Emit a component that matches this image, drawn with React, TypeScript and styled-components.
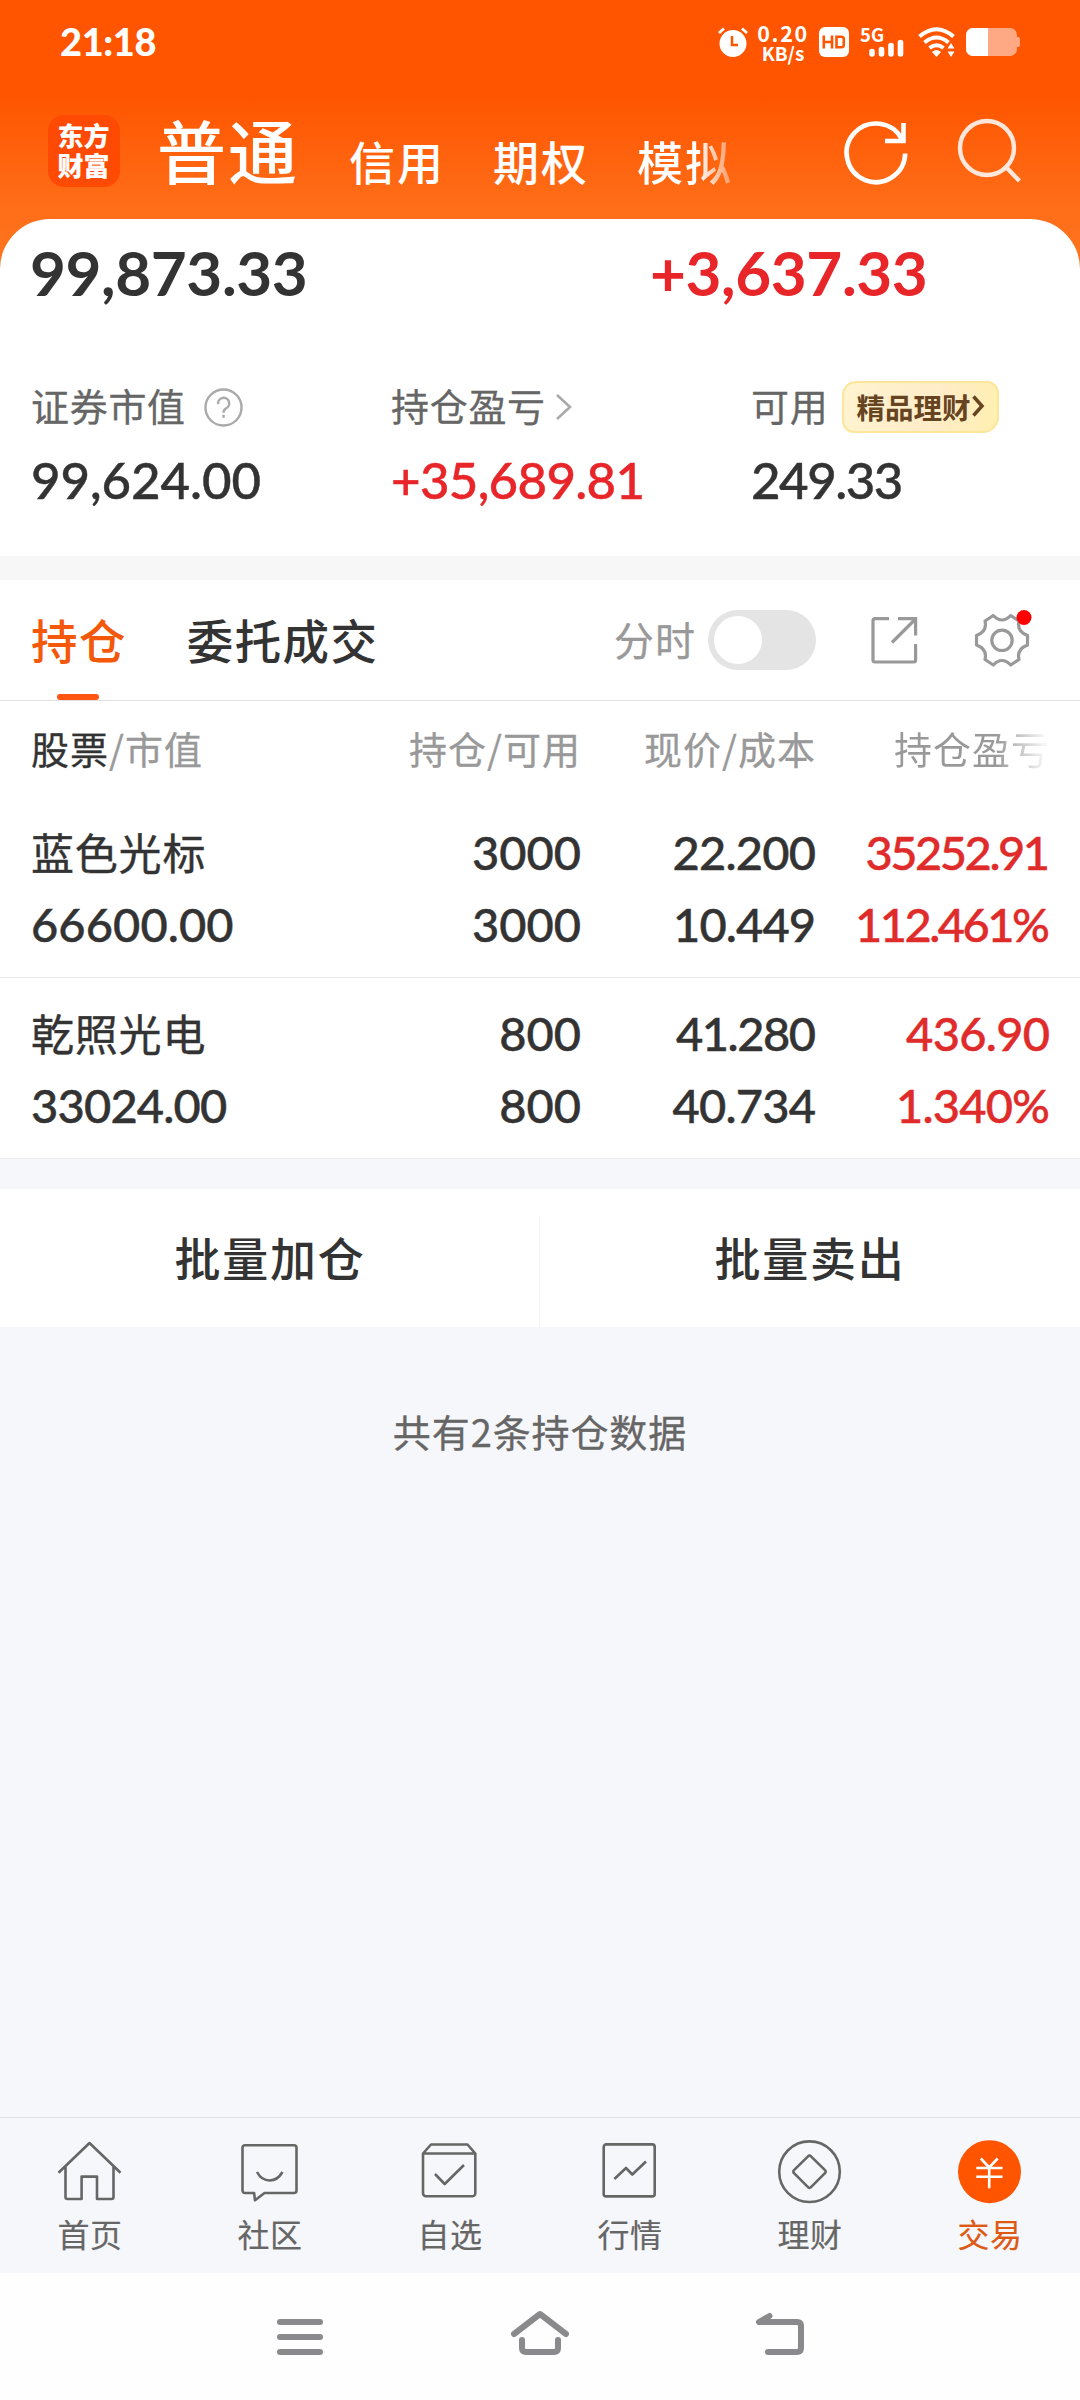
import React from "react";
import styled, { createGlobalStyle } from "styled-components";

const CJK = `"Noto Sans CJK SC", sans-serif`;
const NUM = `Lato, "Noto Sans CJK SC", sans-serif`;

const Global = createGlobalStyle`
  * { box-sizing: border-box; }
  body { margin: 0; background: #f6f7fa; font-family: ${CJK}; }
`;

const Screen = styled.div`
  width: 1080px;
  height: 2400px;
  display: flex;
  flex-direction: column;
  background: #f6f7fa;
  color: #333;
  overflow: hidden;
`;

const Hero = styled.header`
  height: 280px;
  margin-bottom: -61px;
  flex: none;
  background: linear-gradient(#ff5500 0, #ff5500 95px, #ff6e19 210px, #ff761f 280px);
  color: #fff;
`;

const StatusBar = styled.div`
  height: 84px;
  padding: 0 60px;
  display: flex;
  align-items: center;
`;

const Clock = styled.div`
  flex: 1;
  padding-bottom: 2px;
  font: 900 38px/48px ${NUM};
  letter-spacing: -0.4px;
`;

const StatusIcons = styled.div`
  display: flex;
  align-items: center;
`;

const Speed = styled.div`
  width: 52px;
  margin: 0 10px 0 9px;
  display: flex;
  flex-direction: column;
  align-items: center;
`;

const SpeedLine = styled.span<{ $wide?: boolean }>`
  font: 700 ${(p) => (p.$wide ? 21.5 : 19)}px/${(p) => (p.$wide ? 21 : 19)}px ${CJK};
  letter-spacing: ${(p) => (p.$wide ? 1.6 : 0)}px;
`;

const NavBar = styled.div`
  height: 135px;
  padding-left: 48px;
  display: flex;
`;

const Logo = styled.div`
  width: 72px;
  height: 72px;
  margin-top: 31px;
  padding: 5px 1px 0 0;
  border-radius: 16px;
  background: #ff4a04;
  text-align: center;
  font: 900 26px/30px ${CJK};
`;

const Account = styled.div<{ $w: number; $big?: boolean; $fade?: boolean }>`
  width: ${(p) => p.$w}px;
  height: 120px;
  white-space: nowrap;
  font-weight: 500;
  font-size: ${(p) => (p.$big ? 69 : 46)}px;
  line-height: ${(p) => (p.$big ? 130 : 153)}px;
  letter-spacing: 2px;
  ${(p) => p.$fade && `
    color: transparent;
    background: linear-gradient(90deg, #fff 60px, rgba(255,255,255,.35) 94px);
    -webkit-background-clip: text;
    background-clip: text;
  `}
`;

const AccountList = styled.div`
  width: 790px;
  padding-left: 37px;
  display: flex;
`;

const NavIcons = styled.div`
  display: flex;
  padding-top: 33px;
  gap: 48px;
  margin-left: -67px;
`;

const Card = styled.section`
  height: 337px;
  flex: none;
  position: relative;
  border-radius: 50px 50px 0 0;
  background: #fff;
`;

const Totals = styled.div`
  display: grid;
  grid-template-columns: 620px 1fr;
  padding: 16px 0 0 30px;
  font: 700 62px/74px ${NUM};
`;

const Total = styled.div<{ $up?: boolean }>`
  color: ${(p) => (p.$up ? "#e8262a" : "#333")};
  letter-spacing: -0.4px;
`;

const Stats = styled.div`
  display: grid;
  grid-template-columns: 360px 360px 1fr;
  padding: 67px 0 0 31px;
`;

const StatLabel = styled.div`
  height: 62px;
  display: flex;
  align-items: center;
  font-size: 38px;
  letter-spacing: 0.7px;
  color: #666;
  white-space: nowrap;
`;

const LabelText = styled.span`
  padding-bottom: 6px;
  -webkit-text-stroke: 0.3px;
`;

const StatValue = styled.div<{ $up?: boolean; $ls?: number }>`
  padding-top: 6px;
  font: 500 51px/72px ${NUM};
  letter-spacing: ${(p) => p.$ls ?? 0}px;
  -webkit-text-stroke: 0.45px;
  color: ${(p) => (p.$up ? "#e8262a" : "#333")};
`;

const Promo = styled.div`
  width: 157px;
  height: 52px;
  margin-left: 14px;
  padding: 0 0 2px 12px;
  display: flex;
  align-items: center;
  border: 2px solid #fbe69a;
  border-radius: 14px 12px 16px 12px;
  background: linear-gradient(100deg, #fff3d0, #ffecc8 60%, #fff0b0);
  color: #664422;
  font-weight: 700;
  font-size: 28.5px;
  letter-spacing: 0;
`;

const Gap = styled.div`
  height: 24px;
  flex: none;
  background: #f7f7f7;
`;

const TabBar = styled.div`
  height: 121px;
  flex: none;
  padding-left: 31px;
  display: flex;
  align-items: center;
  background: #fff;
  border-bottom: 1px solid #e2e2e2;
`;

const Tab = styled.div<{ $on?: boolean }>`
  height: 120px;
  margin-right: 60px;
  display: flex;
  flex-direction: column;
  align-items: center;
  font-size: 46.5px;
  font-weight: 500;
  line-height: 118px;
  letter-spacing: 1.4px;
  color: ${(p) => (p.$on ? "#f4590b" : "#333")};
`;

const TabLine = styled.span`
  width: 42px;
  height: 6px;
  margin: -4px 2px 0 0;
  border-radius: 3px;
  background: #ff5512;
`;

const Minute = styled.div`
  margin-left: auto;
  padding-bottom: 2px;
  font-size: 40px;
  letter-spacing: 1px;
  color: #999;
  -webkit-text-stroke: 0.3px;
`;

const Toggle = styled.div`
  width: 108px;
  height: 60px;
  margin: 0 53px 0 12px;
  padding: 6px;
  border-radius: 30px;
  background: #e4e4e4;
`;

const Knob = styled.div`
  width: 48px;
  height: 48px;
  border-radius: 50%;
  background: #fff;
`;

const GearButton = styled.div`
  width: 62px;
  height: 62px;
  margin: 0 47px 0 52px;
`;

const Table = styled.div`
  height: 457px;
  flex: none;
  background: #fff;
`;

const columns = `
  display: grid;
  grid-template-columns: 300px 250px 235px 234px;
  padding-left: 31px;
`;

const HeadRow = styled.div`
  ${columns}
  height: 100px;
  font-size: 38px;
  line-height: 94px;
  letter-spacing: 1px;
  color: #999;
  -webkit-text-stroke: 0.3px;
`;

const Head = styled.div<{ $left?: boolean; $fade?: boolean }>`
  text-align: ${(p) => (p.$left ? "left" : "right")};
  white-space: nowrap;
  ${(p) => p.$fade && `
    color: transparent;
    background: linear-gradient(90deg, #999 180px, rgba(153,153,153,.1) 228px);
    -webkit-text-stroke: 0;
    -webkit-background-clip: text;
    background-clip: text;
  `}
`;

const Dark = styled.span`
  color: #333;
`;

const Row = styled.div`
  ${columns}
  height: 181px;
  border-bottom: 1px solid #ececee;
  &:nth-child(2) { height: 177px; padding-top: 15px; }
  &:nth-child(3) { padding-top: 19px; }
`;

const Cell = styled.div<{ $left?: boolean; $up?: boolean }>`
  text-align: ${(p) => (p.$left ? "left" : "right")};
  color: ${(p) => (p.$up ? "#e02b2b" : "#333")};
`;

const Figure = styled.div<{ $ls: number }>`
  font: 500 47px/72px ${NUM};
  letter-spacing: ${(p) => p.$ls}px;
  padding-right: ${(p) => Math.max(0, -p.$ls)}px;
  -webkit-text-stroke: 0.45px;
`;

const Name = styled.div`
  height: 72px;
  font: 400 43px/70px ${CJK};
  letter-spacing: 0.8px;
  -webkit-text-stroke: 0.4px;
`;

const Batch = styled.div`
  height: 138px;
  flex: none;
  margin-top: 31px;
  display: grid;
  grid-template-columns: 1fr 1fr;
  background: #fff;
`;

const BatchButton = styled.div<{ $line?: boolean }>`
  text-align: center;
  font-size: 46px;
  font-weight: 500;
  line-height: 135px;
  letter-spacing: 1.8px;
  ${(p) => p.$line && `
    background: linear-gradient(#f5f5f5, #f5f5f5) 100% 28px / 1px 110px no-repeat;
  `}
`;

const Summary = styled.div`
  flex: 1;
  padding-top: 76px;
  text-align: center;
  font-size: 38px;
  line-height: 56px;
  letter-spacing: 0.9px;
  color: #666;
  -webkit-text-stroke: 0.3px;
`;

const BottomTabs = styled.nav`
  height: 156px;
  flex: none;
  display: grid;
  grid-template-columns: repeat(6, 1fr);
  border-top: 1px solid #dfe0e3;
  background: #f6f7fa;
`;

const BottomTab = styled.div<{ $on?: boolean }>`
  padding-top: 22px;
  display: flex;
  flex-direction: column;
  align-items: center;
  font-size: 32px;
  line-height: 59px;
  letter-spacing: 0.6px;
  color: ${(p) => (p.$on ? "#dc5a14" : "#666")};
  -webkit-text-stroke: 0.2px;
`;

const SystemNav = styled.div`
  height: 127px;
  flex: none;
  display: flex;
  justify-content: center;
  gap: 176px;
  padding-top: 31px;
  background: #fefefe;
`;

const Line = styled.svg<{ $ml?: number }>`
  display: block;
  flex: none;
  margin-left: ${(p) => p.$ml ?? 0}px;
  fill: none;
  stroke: currentColor;
  overflow: visible;
`;

const icons: Record<string, React.ReactNode> = {
  首页: <path d="M.5 32.8 31.5 3 62.5 32.8M7.5 27V57a2 2 0 0 0 2 2H23.6V36.6H39V59H53.5a2 2 0 0 0 2-2V27" />,
  社区: (
    <>
      <path d="M7 5.3H56a2.5 2.5 0 0 1 2.5 2.5V50.5A2.5 2.5 0 0 1 56 53H26.5L17 60.3 16.1 53H7a2.5 2.5 0 0 1-2.5-2.5V7.8A2.5 2.5 0 0 1 7 5.3Z" />
      <path d="M19 32C25 43.3 38 43.3 44.5 32" />
    </>
  ),
  自选: (
    <>
      <path d="M5 13.5 13 4.5H49.5L57.3 13.5V53.3a3 3 0 0 1-3 3H8a3 3 0 0 1-3-3ZM5 13.5H57.3" />
      <path d="M17 34 26.7 44 46 25" />
    </>
  ),
  行情: (
    <>
      <rect x="5.7" y="4.4" width="51" height="52" rx="2.5" />
      <path d="M16.4 39 28 28 34.3 34.5 48 21.5" />
    </>
  ),
  理财: (
    <>
      <circle cx="31.5" cy="31.7" r="30.3" />
      <path d="M30 16.3a2 2 0 0 1 3 0L47 30.2a2 2 0 0 1 0 3L33 47.2a2 2 0 0 1-3 0L16 33.2a2 2 0 0 1 0-3Z" />
    </>
  ),
  交易: (
    <>
      <circle cx="31.5" cy="31.7" r="31.5" fill="#ff5500" stroke="none" />
      <path stroke="#fff" d="M22.8 18.5 31.2 27.5 39.6 18.5M18.3 28H44.5M18.3 36.8H44.5M31.2 27.5V48.3" />
    </>
  ),
};

type Fig = [text: string, spacing: number];

interface Holding {
  name: string;
  value: Fig;
  amount: Fig[];
  price: Fig[];
  profit: Fig[];
}

const holdings: Holding[] = [
  {
    name: "蓝色光标",
    value: ["66600.00", 0.1],
    amount: [["3000", 0], ["3000", 0]],
    price: [["22.200", -0.8], ["10.449", -0.9]],
    profit: [["35252.91", -2.5], ["112.461%", -2.5]],
  },
  {
    name: "乾照光电",
    value: ["33024.00", -0.8],
    amount: [["800", 0], ["800", 0]],
    price: [["41.280", -1.5], ["40.734", -0.8]],
    profit: [["436.90", -0.7], ["1.340%", -0.8]],
  },
];

const Figures = ({ items }: { items: Fig[] }) => (
  <>{items.map(([text, ls], i) => <Figure key={i} $ls={ls}>{text}</Figure>)}</>
);

export default function App() {
  return (
    <Screen>
      <Global />
      <Hero>
        <StatusBar>
          <Clock>21:18</Clock>
          <StatusIcons>
            <Line width="30" height="30" viewBox="0 0 30 30">
              <circle cx="15" cy="16.5" r="13.5" fill="#fff" stroke="none" />
              <path d="M1 6 6 1.5M24 1.5 29 6" strokeWidth="2.8" />
              <path d="M14 9V18H20" stroke="#ff5500" strokeWidth="2.5" />
            </Line>
            <Speed><SpeedLine $wide>0.20</SpeedLine><SpeedLine>KB/s</SpeedLine></Speed>
            <Line width="30" height="30" viewBox="0 0 30 30">
              <rect width="30" height="30" rx="6" fill="#fff" stroke="none" />
              <path d="M4.8 8.5V21.5M13 8.5V21.5M4.8 15H13M17.5 9.7H22Q24.8 9.7 24.8 12V18Q24.8 20.3 22 20.3H17.5Z" stroke="#ff5500" strokeWidth="2.6" />
            </Line>
            <Line $ml={11} width="46" height="30" viewBox="0 0 46 30">
              <text x="0" y="14.5" fontFamily="Noto Sans CJK SC" fontWeight="700" fontSize="18.5" fill="#fff" stroke="none">5G</text>
              <path d="M12 24.5V27M21.5 22.5V27M31 18.5V27M40.5 15.5V27" strokeWidth="5.6" strokeLinecap="round" />
            </Line>
            <Line $ml={12} width="38" height="30" viewBox="0 0 38 30">
              <path d="M1.5 9.5Q18.5-5 35.5 9.5M6.5 15.5Q18.5 5.5 30.5 15.5M11.5 21Q18.5 15.5 25.5 21" strokeWidth="3.9" />
              <path d="M14 25Q18.5 21 23 25L18.5 30ZM29.5 21.5 33 16 36.5 21.5ZM29.5 24.5 33 30 36.5 24.5Z" fill="#fff" stroke="none" />
            </Line>
            <Line $ml={10} width="54" height="28" viewBox="0 0 54 28">
              <rect width="51" height="28" rx="7" fill="#ffa984" stroke="none" />
              <path d="M51 9h1q2 0 2 2v6q0 2-2 2h-1Z" fill="#ffa984" stroke="none" />
              <path d="M7 0H22V28H7A7 7 0 0 1 0 21V7A7 7 0 0 1 7 0Z" fill="#fff" stroke="none" />
            </Line>
          </StatusIcons>
        </StatusBar>
        <NavBar>
          <Logo>东方<br />财富</Logo>
          <AccountList>
            <Account $w={192} $big>普通</Account>
            <Account $w={144}>信用</Account>
            <Account $w={144}>期权</Account>
            <Account $w={94} $fade>模拟</Account>
          </AccountList>
          <NavIcons>
            <Line width="66" height="70" viewBox="843 117 66 70" strokeWidth="4.6">
              <path d="M905.2 153.5A29.3 29.3 0 1 1 902 139.5M903.5 123V141H885" />
            </Line>
            <Line width="66" height="70" viewBox="957 117 66 70" strokeWidth="4.4" opacity=".85">
              <circle cx="987" cy="148" r="27" />
              <path d="M1006 167 1019.5 181" />
            </Line>
          </NavIcons>
        </NavBar>
      </Hero>
      <Card>
        <Totals>
          <Total>99,873.33</Total>
          <Total $up>+3,637.33</Total>
        </Totals>
        <Stats>
          <div>
            <StatLabel>
              <LabelText>证券市值</LabelText>
              <Line $ml={18} width="39" height="39" viewBox="0 0 40 40" color="#aaa">
                <circle cx="20" cy="20" r="18.5" strokeWidth="2.5" />
                <path d="M14.5 16.5A5.7 5.7 0 1 1 22.5 21Q20 22.5 20 25.5M20 27.5V30.5" strokeWidth="2.5" />
              </Line>
            </StatLabel>
            <StatValue $ls={-0.1}>99,624.00</StatValue>
          </div>
          <div>
            <StatLabel>
              <LabelText>持仓盈亏</LabelText>
              <Line $ml={9} width="18" height="26" viewBox="0 0 18 26" color="#aaa" strokeWidth="2.6">
                <path d="M2 1 15 13 2 25" />
              </Line>
            </StatLabel>
            <StatValue $up $ls={-0.7}>+35,689.81</StatValue>
          </div>
          <div>
            <StatLabel>
              <LabelText>可用</LabelText>
              <Promo>
                精品理财
                <Line $ml={2} width="12" height="20" viewBox="0 0 12 20" strokeWidth="3.5">
                  <path d="M1.5 0.5 10 10 1.5 19.5" />
                </Line>
              </Promo>
            </StatLabel>
            <StatValue $ls={-1.5}>249.33</StatValue>
          </div>
        </Stats>
      </Card>
      <Gap />
      <TabBar>
        <Tab $on>持仓<TabLine /></Tab>
        <Tab>委托成交</Tab>
        <Minute>分时</Minute>
        <Toggle><Knob /></Toggle>
        <Line width="50" height="50" viewBox="869 615 50 50" color="#999" strokeWidth="3.2">
          <path d="M889 618.7H875a2 2 0 0 0-2 2V660a2 2 0 0 0 2 2H913.6a2 2 0 0 0 2-2V644M898 618.7H915.6V635.5M892 642.5 915 619.5" />
        </Line>
        <GearButton>
          <Line width="62" height="62" viewBox="971 609 62 62" color="#999" strokeWidth="3.2">
            <circle cx="1002" cy="640.3" r="10.2" />
            <path d="M993.3 615.5Q1002 624.5 1010.7 615.5L1019 621Q1016.5 631.5 1027.5 635.5V645Q1016.5 649 1019 659.5L1010.7 665Q1002 656 993.3 665L985 659.5Q987.5 649 976.5 645V635.5Q987.5 631.5 985 621Z" strokeLinejoin="round" />
            <circle cx="1024" cy="617.5" r="7.5" fill="#f00" stroke="none" />
          </Line>
        </GearButton>
      </TabBar>
      <Table>
        <HeadRow>
          <Head $left><Dark>股票</Dark>/市值</Head>
          <Head>持仓/可用</Head>
          <Head>现价/成本</Head>
          <Head $fade>持仓盈亏</Head>
        </HeadRow>
        {holdings.map((h) => (
          <Row key={h.name}>
            <Cell $left><Name>{h.name}</Name><Figures items={[h.value]} /></Cell>
            <Cell><Figures items={h.amount} /></Cell>
            <Cell><Figures items={h.price} /></Cell>
            <Cell $up><Figures items={h.profit} /></Cell>
          </Row>
        ))}
      </Table>
      <Batch>
        <BatchButton $line>批量加仓</BatchButton>
        <BatchButton>批量卖出</BatchButton>
      </Batch>
      <Summary>共有2条持仓数据</Summary>
      <BottomTabs>
        {Object.entries(icons).map(([label, icon]) => (
          <BottomTab key={label} $on={label === "交易"}>
            <Line width="64" height="64" viewBox="0 0 64 64" strokeWidth="2.6" strokeLinejoin="round">{icon}</Line>
            {label}
          </BottomTab>
        ))}
      </BottomTabs>
      <SystemNav>
        <Line width="64" height="64" viewBox="268 2304 64 64" color="#8a8a8c" strokeWidth="6" strokeLinecap="round">
          <path d="M280 2322H320M280 2337H320M280 2352H320" />
        </Line>
        <Line width="64" height="64" viewBox="508 2304 64 64" color="#8a8a8c" strokeWidth="6" strokeLinecap="round" strokeLinejoin="round">
          <path d="M514 2334 540 2314 566 2334M522 2340V2348Q522 2352 526 2352H554Q558 2352 558 2348V2340" />
        </Line>
        <Line width="64" height="64" viewBox="748 2304 64 64" color="#8a8a8c" strokeWidth="6" strokeLinecap="round" strokeLinejoin="round">
          <path d="M769.5 2316 759 2322H797Q801 2322 801 2326V2348Q801 2352 797 2352H768" />
        </Line>
      </SystemNav>
    </Screen>
  );
}
